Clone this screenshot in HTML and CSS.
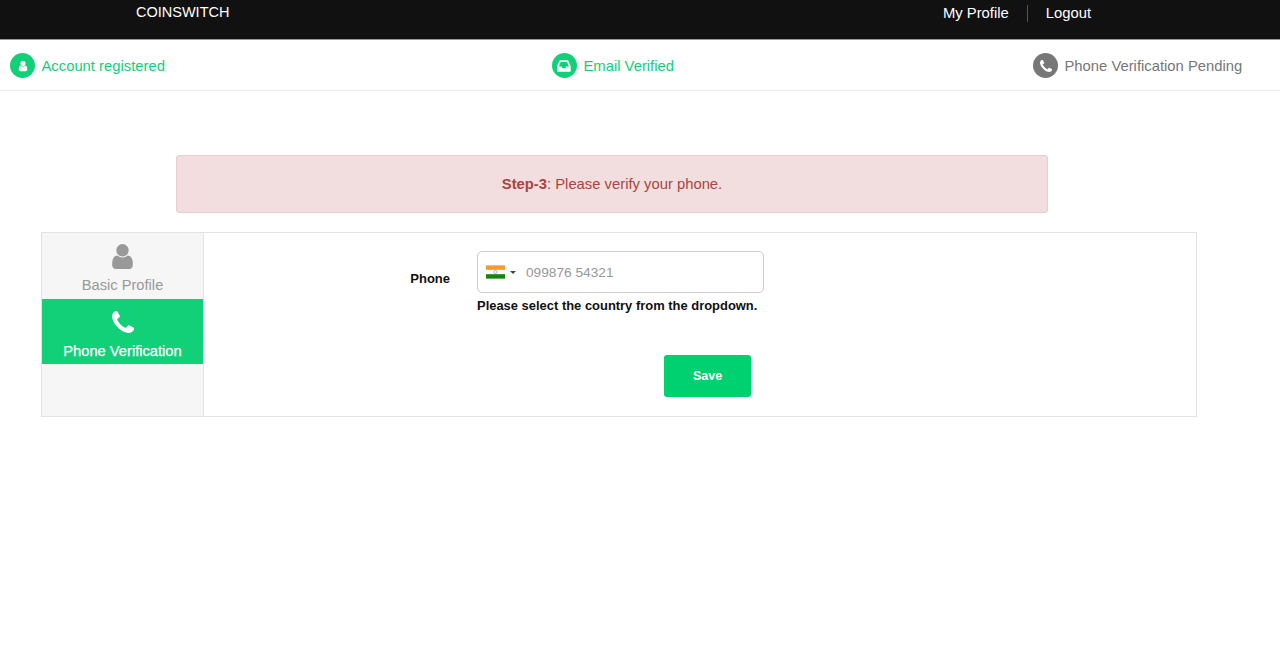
FILE: index.html
```html
<!DOCTYPE html>
<html lang="en">
<head>
<meta charset="utf-8">
<title>Coinswitch</title>
<link rel="stylesheet" href="styles.css">
</head>
<body>
<header class="topbar">
  <a class="brand">COINSWITCH</a>
  <nav class="topnav">
    <a class="topnav-link">My Profile</a>
    <a class="topnav-link topnav-link-last">Logout</a>
  </nav>
</header>
<div class="steps">
  <div class="step step-done">
    <span class="step-icon"><svg class="glyph-user-sm" viewBox="0 0 1792 1792"><path d="M1536 1399q0 109-62.500 187t-150.500 78h-854q-88 0-150.500-78t-62.500-187q0-85 8.500-160.500t31.500-152 58.500-131 94-89 134.500-34.500q131 128 313 128t313-128q76 0 134.500 34.500t94 89 58.500 131 31.500 152 8.500 160.500zm-256-887q0 159-112.500 271.500t-271.500 112.500-271.500-112.500-112.500-271.500 112.500-271.500 271.500-112.500 271.500 112.500 112.500 271.500z"/></svg></span>
    <span>Account registered</span>
  </div>
  <div class="step step-done">
    <span class="step-icon"><svg class="glyph-inbox" viewBox="0 0 1792 1792"><path d="M1023 960h316q-1-3-2.500-8.500t-2.500-7.500l-212-496h-708l-212 496q-1 3-2.500 8.500t-2.500 7.500h316l95 192h320zm513 30v482q0 26-19 45t-45 19h-1408q-26 0-45-19t-19-45v-482q0-62 25-123l238-552q10-25 36.500-42t52.500-17h832q26 0 52.500 17t36.500 42l238 552q25 61 25 123z"/></svg></span>
    <span>Email Verified</span>
  </div>
  <div class="step step-pending">
    <span class="step-icon"><svg class="glyph-phone-sm" viewBox="0 0 1408 1408"><path d="M1408 1112q0 27-10 70.500t-21 68.500q-21 50-122 106-94 51-186 51-27 0-53-3.500t-57.500-12.500-47-14.500-55.500-20.500-49-18q-98-35-175-83-127-79-264-216t-216-264q-48-77-83-175-3-9-18-49t-20.500-55.500-14.500-47-12.500-57.500-3.500-53q0-92 51-186 56-101 106-122 25-11 68.500-21t70.500-10q14 0 21 3 18 6 53 76 11 19 30 54t35 63.500 31 53.500q3 4 17.500 25t21.500 35.500 7 28.500q0 20-28.500 50t-62 55-62 53-28.500 46q0 9 5 22.500t8.500 20.500 14 24 11.500 19q76 137 174 235t235 174q2 1 19 11.500t24 14 20.500 8.500 22.500 5q18 0 46-28.500t53-62 55-62 50-28.500q14 0 28.500 7t35.500 21.500 25 17.500q25 15 53.500 31t63.500 35 54 30q70 35 76 53 3 7 3 21z"/></svg></span>
    <span>Phone Verification Pending</span>
  </div>
</div>
<main class="content">
  <div class="alert"><strong>Step-3</strong>: Please verify your phone.</div>
  <section class="card">
    <aside class="side">
      <div class="side-item">
        <svg class="side-user" viewBox="0 0 1792 1792"><path d="M1536 1399q0 109-62.500 187t-150.500 78h-854q-88 0-150.500-78t-62.500-187q0-85 8.500-160.500t31.500-152 58.500-131 94-89 134.500-34.500q131 128 313 128t313-128q76 0 134.500 34.500t94 89 58.500 131 31.500 152 8.500 160.500zm-256-887q0 159-112.500 271.500t-271.500 112.500-271.500-112.500-112.500-271.500 112.500-271.500 271.500-112.500 271.500 112.500 112.500 271.500z"/></svg>
        <span>Basic Profile</span>
      </div>
      <div class="side-item side-item-active">
        <svg class="side-phone" viewBox="0 0 1408 1408"><path d="M1408 1112q0 27-10 70.500t-21 68.500q-21 50-122 106-94 51-186 51-27 0-53-3.500t-57.500-12.500-47-14.500-55.500-20.500-49-18q-98-35-175-83-127-79-264-216t-216-264q-48-77-83-175-3-9-18-49t-20.500-55.500-14.500-47-12.500-57.500-3.500-53q0-92 51-186 56-101 106-122 25-11 68.500-21t70.500-10q14 0 21 3 18 6 53 76 11 19 30 54t35 63.500 31 53.500q3 4 17.500 25t21.500 35.500 7 28.500q0 20-28.500 50t-62 55-62 53-28.500 46q0 9 5 22.500t8.500 20.500 14 24 11.500 19q76 137 174 235t235 174q2 1 19 11.500t24 14 20.500 8.500 22.500 5q18 0 46-28.500t53-62 55-62 50-28.500q14 0 28.500 7t35.500 21.500 25 17.500q25 15 53.500 31t63.500 35 54 30q70 35 76 53 3 7 3 21z"/></svg>
        <span>Phone Verification</span>
      </div>
    </aside>
    <div class="form">
      <div class="form-row">
        <label class="form-label">Phone</label>
        <div class="form-field">
          <div class="phone-input">
            <svg class="flag" viewBox="0 0 20 14"><rect width="20" height="14" fill="#fff"/><rect width="20" height="4.700" fill="#f79a32"/><rect y="9.300" width="20" height="4.700" fill="#138808"/><circle cx="10" cy="7" r="1.600" fill="none" stroke="#7a7ab0" stroke-width=".6"/></svg>
            <span class="caret"></span>
            <span class="placeholder">099876 54321</span>
          </div>
          <p class="hint">Please select the country from the dropdown.</p>
        </div>
      </div>
      <button class="save">Save</button>
    </div>
  </section>
</main>
</body>
</html>
```
FILE: styles.css
```css
* { box-sizing: border-box; }
html, body { margin: 0; height: 100%; }
body { font-family: "Liberation Sans", Arial, sans-serif; background: #fff; color: #111; font-size: 14px; }

.topbar { height: 40px; background: #111; color: #fff; border-bottom: 1px solid #999; display: flex; justify-content: space-between; padding: 0 189px 0 136px; }
.brand { font-size: 14.5px; line-height: 24px; }
.topnav { display: flex; align-items: flex-start; padding-top: 5px; }
.topnav-link { font-size: 14.800px; line-height: 17px; padding-right: 18px; border-right: 1px solid #555; }
.topnav-link-last { padding: 0 0 0 18px; border-right: 0; }

.steps { height: 51px; border-bottom: 1px solid #eee; display: grid; grid-template-columns: 542px 481px 1fr; align-items: center; padding: 1px 0 0 10px; }
.step { display: flex; align-items: center; gap: 6.500px; font-size: 14.800px; }
.step-done { color: #11d078; }
.step-pending { color: #777; }
.step-icon { width: 25px; height: 25px; border-radius: 50%; display: flex; align-items: center; justify-content: center; fill: #fff; }
.step-done .step-icon { background: #11d078; }
.step-pending .step-icon { background: #777; }
.glyph-user-sm { width: 12px; height: 12px; }
.glyph-inbox { width: 16px; height: 16px; }
.glyph-phone-sm { width: 12px; height: 12px; }

.content { padding: 64px 83px 0 41px; }
.alert { width: 872px; height: 58px; margin-left: 135px; background: #f2dede; border: 1px solid #ebccd1; border-radius: 3px; color: #a94442; font-size: 14.800px; display: flex; align-items: center; justify-content: center; }
.alert strong { font-weight: 700; }

.card { margin-top: 19px; height: 185px; border: 1px solid #e3e3e3; display: flex; }
.side { width: 162px; background: #f6f6f6; border-right: 1px solid #e3e3e3; }
.side-item { width: 161px; height: 66px; display: flex; flex-direction: column; align-items: center; padding-top: 9px; gap: 6px; color: #999; fill: #999; font-size: 14.700px; line-height: 17px; }
.side-item-active { height: 65px; background: #11d078; color: #fff; fill: #fff; padding-top: 12px; gap: 10px; -webkit-text-stroke: .25px #fff; }
.side-user { width: 29px; height: 29px; }
.side-phone { width: 22px; height: 22px; }

.form { flex: 1; position: relative; }
.form-row { display: flex; padding-top: 18px; }
.form-label { width: 246px; text-align: right; font-weight: 700; font-size: 13px; color: #111; padding-top: 20px; line-height: 15px; }
.form-field { margin-left: 27px; width: 287px; }
.phone-input { height: 42px; border: 1px solid #ccc; border-radius: 5px; display: flex; align-items: center; padding-left: 8px; }
.flag { width: 19px; height: 14px; }
.caret { width: 0; height: 0; border-left: 3px solid transparent; border-right: 3px solid transparent; border-top: 3px solid #444; margin-left: 5px; }
.placeholder { margin-left: 10px; color: #999; font-size: 13.700px; }
.hint { margin: 6px 0 0; font-weight: 700; font-size: 12.950px; line-height: 14px; white-space: nowrap; color: #111; }
.save { display: block; width: 87px; height: 42px; margin: 42px 0 0 460px; background: #00d170; color: #fff; border: 0; border-radius: 3px; font: 700 12.500px "Liberation Sans", Arial, sans-serif; }
```
